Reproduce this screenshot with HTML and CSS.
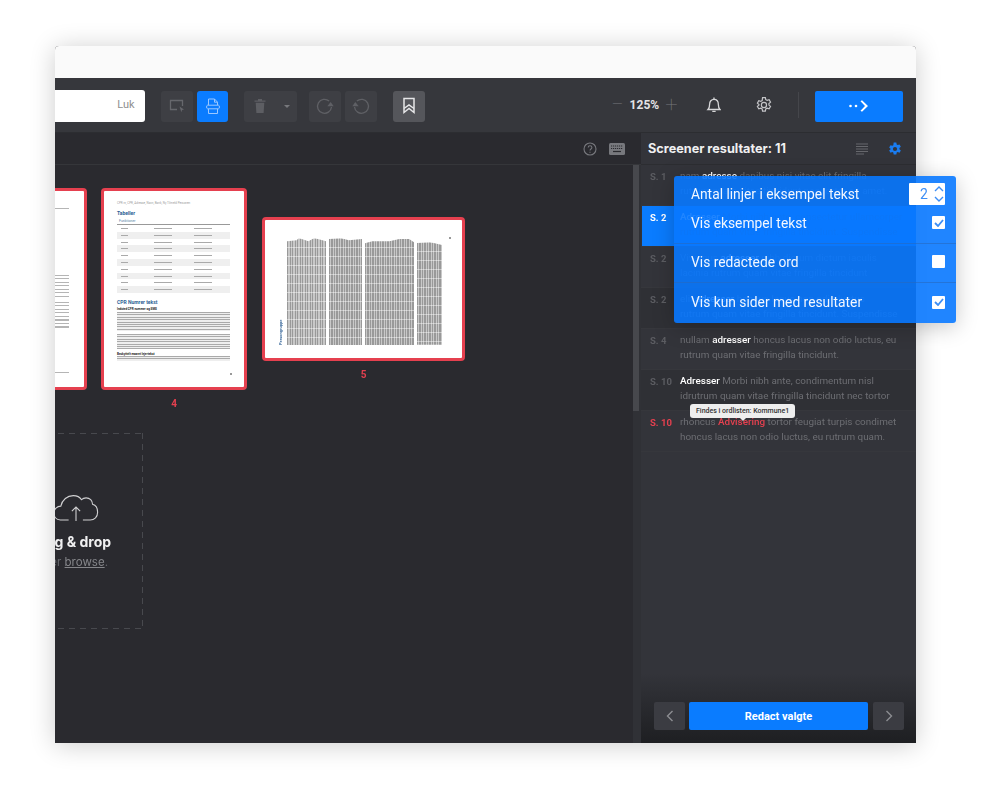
FILE: index.html
```html
<!DOCTYPE html>
<html lang="en">

<head>
  <meta charset="UTF-8">
  <meta name="viewport" content="width=device-width, initial-scale=1.0">
  <title>Screener</title>
  <link rel="stylesheet" href="styles.css">
</head>

<body>
  <div class="window">
    <div class="titlebar"></div>

    <header class="toolbar">
      <div class="search">Luk</div>
      <button class="tool first">
        <svg width="18" height="18" viewBox="0 0 18 18" fill="none" stroke="#66676c" stroke-width="1.3"><path d="M9 12.500H2.500v-9h12V9"/><path d="M11.500 9.500l4.500 3-2 .5-.6 2.200z" fill="#66676c" stroke="none"/></svg>
      </button>
      <button class="tool active">
        <svg width="18" height="18" viewBox="0 0 18 18" fill="none" stroke="#9cc8ff" stroke-width="1"><path d="M4.500 8V2h6l3 3.200V8M4.500 12v4.500h9V12"/><path d="M10.500 2v3.200h3"/><path d="M3.500 8.200h11c1.200 0 1.200 3.600 0 3.600h-11c-1.200 0-1.200-3.600 0-3.600z"/></svg>
      </button>
      <div class="tool-group">
        <button class="tool">
          <svg width="18" height="18" viewBox="0 0 18 18" fill="#5d5e63"><path d="M3.500 3.500h11v1.300h-11zM7 2h4v1.500H7zM4.700 5.800h8.600l-.7 10.200H5.400z"/></svg>
        </button>
        <button class="tool caret"><span></span></button>
      </div>
      <button class="tool redo">
        <svg width="22" height="22" viewBox="0 0 22 22" fill="none" stroke="#5f6065" stroke-width="1.3"><path d="M17.500 12a7 7 0 1 1-2.400-6"/><path d="M13.300 11.300h6.400l-3-4.200z" fill="#5f6065" stroke="none"/></svg>
      </button>
      <button class="tool">
        <svg width="22" height="22" viewBox="0 0 22 22" fill="none" stroke="#5f6065" stroke-width="1.3"><path d="M4.500 12a7 7 0 1 0 2.400-6"/><path d="M8.700 11.300H2.300l3-4.200z" fill="#5f6065" stroke="none"/></svg>
      </button>
      <button class="tool bookmark">
        <svg width="16" height="18" viewBox="0 0 16 18" fill="none" stroke="#e6e6e8" stroke-width="1.500"><path d="M3 1.500h10v14l-5-4-5 4z"/><path d="M3 11.500l5-3.500 5 3.500"/></svg>
      </button>

      <div class="zoom">
        <span class="zoom-sign">&minus;</span>
        <span class="zoom-value">125%</span>
        <span class="zoom-sign">+</span>
      </div>
      <svg class="bell" width="16" height="18" viewBox="0 0 16 18" fill="none" stroke="#d6d6d8" stroke-width="1.300"><path d="M2 13.500c1.300-1.300 1.600-2.500 1.600-5C3.600 5.300 5.400 3.300 8 3.300s4.400 2 4.400 5.200c0 2.500.3 3.700 1.600 5z"/><path d="M8 1.500v1.800M6.300 15.500h3.400"/></svg>
      <svg class="cog" width="18" height="18" viewBox="0 0 18 18" fill="none" stroke="#c4c4c7" stroke-width="1.200"><path d="M7.600 1.500h2.800l.4 2.100 1.400.8 2-.7 1.400 2.400-1.600 1.400v1.600l1.600 1.400-1.400 2.400-2-.7-1.400.8-.4 2.100H7.600l-.4-2.100-1.400-.8-2 .7-1.400-2.400 1.600-1.400V8.500L2.400 7.100l1.400-2.400 2 .7 1.400-.8z"/><circle cx="9" cy="9" r="2.600"/></svg>
      <span class="divider"></span>
      <button class="send">
        <svg width="22" height="12" viewBox="0 0 22 12" fill="#fff"><circle cx="2.500" cy="6" r="1.300"/><circle cx="8" cy="6" r="1.300"/><path d="M12.500 1.300l1.500-1.100L20 6l-6 5.800-1.500-1.100L17 6z"/></svg>
      </button>
    </header>

    <div class="content">
      <main class="viewer">
        <div class="viewer-bar">
          <svg width="14" height="14" viewBox="0 0 14 14" fill="none" stroke="#77787d" stroke-width="1.100"><circle cx="7" cy="7" r="6"/><path d="M5.200 5.500c0-2.300 3.700-2.300 3.700 0 0 1.500-1.900 1.400-1.900 3"/><path d="M7 9.700v1.100"/></svg>
          <svg width="16" height="12" viewBox="0 0 16 12"><rect width="16" height="12" rx="1.500" fill="#77787d"/><path d="M2 3h12M2 5.500h12" stroke="#2a2a2f" stroke-dasharray="1.200 .8"/><path d="M4 8.500h8" stroke="#2a2a2f" stroke-width="1.200"/></svg>
        </div>

        <div class="scroll-track"><span class="scroll-thumb"></span></div>

        <div class="pages">
          <figure class="page page-cut">
            <div class="sheet">
              <div class="stub-lines stub-top"></div>
              <div class="stub-lines stub-mid"></div>
              <div class="stub-lines stub-low"></div>
              <div class="stub-lines stub-end"></div>
            </div>
          </figure>

          <figure class="page">
            <div class="sheet sheet-text">
              <p class="doc-meta">CPR nr, CPR, Adresse, Navn, Bank, Ny Tilmeld Personen</p>
              <p class="doc-title">Tabeller</p>
              <p class="doc-sub">Funktioner</p>
              <div class="doc-table">
                <i></i><i class="alt"></i><i></i><i class="alt"></i><i></i><i class="alt"></i><i></i><i class="alt"></i><i></i><i class="alt"></i>
              </div>
              <p class="doc-title doc-title-2">CPR Numrer tekst</p>
              <p class="doc-bold">Indsted CPR nummer og SMS</p>
              <div class="doc-para"></div>
              <div class="doc-para doc-para-2"></div>
              <p class="doc-bold doc-bold-2">Beskyttelt maaret lejertekst</p>
              <div class="doc-para doc-para-3"></div>
              <span class="doc-num"></span>
            </div>
            <figcaption>4</figcaption>
          </figure>

          <figure class="page page-land">
            <div class="sheet sheet-land">
              <span class="land-title">Persongruppe</span>
              <div class="land-cols">
                <i class="w1"></i><i class="w2"></i><i class="w3"></i><i class="w4"></i>
              </div>
              <span class="land-num"></span>
            </div>
            <figcaption>5</figcaption>
          </figure>
        </div>

        <div class="dropzone">
          <svg width="46" height="28" viewBox="0 0 50 30" fill="none" stroke="#cfcfd1" stroke-width="1.200"><path d="M17 28H8C3 28 1 24 1 20.500 1 16 4.500 13 8.500 13 10 6 15.500 1.500 22 1.500c4 0 7.500 2 9 4.500 1.500-1.500 3.500-2 5-2 4 0 7 3 7 7 3.500 1 5.500 4 5.500 8.500 0 5-3.500 8.500-8 8.500h-8"/><path d="M25 29V14M20.500 18.500L25 14l4.500 4.500"/></svg>
          <strong>Drag &amp; drop</strong>
          <p>eller <u>browse</u>.</p>
        </div>
      </main>

      <aside class="results">
        <div class="results-head">
          <h2>Screener resultater: 11</h2>
          <svg width="12" height="12" viewBox="0 0 12 12" stroke="#66676c" stroke-width="1"><path d="M0 1h12M0 3.500h12M0 6h12M0 8.500h12M0 11h8"/></svg>
          <svg class="head-cog" width="14" height="14" viewBox="0 0 18 18" fill="#1a7cf0"><path fill-rule="evenodd" d="M7.300.8h3.400l.5 2.400 1.300.7 2.300-.8 1.700 2.900-1.800 1.600v1.600l1.800 1.600-1.700 2.900-2.300-.8-1.300.7-.5 2.400H7.300l-.5-2.400-1.300-.7-2.300.8-1.700-2.900 1.800-1.600V8.600L1.500 7l1.700-2.900 2.300.8 1.300-.7zM9 6.300a2.700 2.700 0 1 0 0 5.400 2.700 2.700 0 0 0 0-5.400z"/></svg>
        </div>

        <div class="result">
          <span class="pg">S. 1</span>
          <p>nam <b>adresse</b> dapibus nisi vitae elit fringilla<br>rutrum quam vitae tincidunt nec tortor sit amet.</p>
        </div>
        <div class="result selected">
          <span class="pg">S. 2</span>
          <p><b>Adresser</b> Morbi nibh ante, consectetur ullamcorper<br>rutrum quam vitae fringilla tincidunt. Suspendisse</p>
        </div>
        <div class="result">
          <span class="pg">S. 2</span>
          <p>Vivamus <b>adresser</b> nibh dictum dictum iaculis<br>lacinia rutrum quam vitae fringilla tincidunt</p>
        </div>
        <div class="result shade">
          <span class="pg">S. 2</span>
          <p>elit <b>adresser</b> honcus lacus non odio luctus<br>rutrum quam vitae fringilla tincidunt. Suspendisse</p>
        </div>
        <div class="result">
          <span class="pg">S. 4</span>
          <p>nullam <b>adresser</b> honcus lacus non odio luctus, eu<br>rutrum quam vitae fringilla tincidunt.</p>
        </div>
        <div class="result shade">
          <span class="pg">S. 10</span>
          <p><b>Adresser</b> Morbi nibh ante, condimentum nisl<br>idrutrum quam vitae fringilla tincidunt nec tortor</p>
        </div>
        <div class="result flagged">
          <span class="pg">S. 10</span>
          <p>rhoncus <b>Advisering</b> tortor feugiat turpis condimet<br>honcus lacus non odio luctus, eu rutrum quam.</p>
          <span class="tooltip">Findes i ordlisten: Kommune1</span>
        </div>

        <div class="results-foot">
          <button class="arrow"><svg width="8" height="12" viewBox="0 0 8 12" fill="none" stroke="#8d8e92" stroke-width="1.400"><path d="M6.500 1L1.500 6l5 5"/></svg></button>
          <button class="redact">Redact valgte</button>
          <button class="arrow arrow-next"><svg width="8" height="12" viewBox="0 0 8 12" fill="none" stroke="#8d8e92" stroke-width="1.400"><path d="M1.500 1l5 5-5 5"/></svg></button>
        </div>

        <div class="settings">
          <div class="setting setting-num">
            <span>Antal linjer i eksempel tekst</span>
            <div class="stepper">
              <em>2</em>
              <svg width="10" height="20" viewBox="0 0 10 20" fill="none" stroke="#3d8ef5" stroke-width="1.400"><path d="M1 7l4-4 4 4M1 13l4 4 4-4"/></svg>
            </div>
          </div>
          <div class="setting setting-sample">
            <span>Vis eksempel tekst</span>
            <label class="box"><svg width="10" height="8" viewBox="0 0 10 8" fill="none" stroke="#3d8ef5" stroke-width="1.800"><path d="M1 4l3 3 5-6"/></svg></label>
          </div>
          <div class="setting setting-words">
            <span>Vis redactede ord</span>
            <label class="box"></label>
          </div>
          <div class="setting setting-pages">
            <span>Vis kun sider med resultater</span>
            <label class="box"><svg width="10" height="8" viewBox="0 0 10 8" fill="none" stroke="#3d8ef5" stroke-width="1.800"><path d="M1 4l3 3 5-6"/></svg></label>
          </div>
        </div>
      </aside>
    </div>
  </div>
</body>

</html>
```

FILE: styles.css
```css
* {
  box-sizing: border-box;
}

body {
  margin: 0;
  height: 792px;
  padding: 46px 0 0 55px;
  overflow: hidden;
  background-color: #fff;
  font-family: Roboto, "Liberation Sans", sans-serif;
}

button {
  border: none;
  padding: 0;
  font-family: inherit;
}

p,
figure,
h2 {
  margin: 0;
}

.window {
  display: flex;
  flex-direction: column;
  width: 861px;
  height: 697px;
  border-radius: 4px 4px 0 0;
  background-color: #2a2a2f;
  box-shadow: 0 2px 26px rgba(0, 0, 0, 0.2);
  filter: blur(0.35px);
}

.titlebar {
  flex: 0 0 32px;
  border-radius: 4px 4px 0 0;
  background-color: #fafafa;
}

.toolbar {
  flex: 0 0 55px;
  display: flex;
  align-items: center;
  padding: 2px 13px 0 0;
  border-bottom: 1px solid #2c2d31;
  background-color: #36373c;
}

.search {
  width: 90px;
  height: 32px;
  padding-right: 10px;
  border-radius: 0 3px 3px 0;
  background-color: #fff;
  color: #8f8f8f;
  font-size: 11px;
  line-height: 30px;
  text-align: right;
}

.tool {
  display: flex;
  align-items: center;
  justify-content: center;
  width: 32px;
  height: 31px;
  margin-left: 4px;
  border-radius: 3px;
  background-color: #3e3f44;
}

.tool.first {
  margin-left: 16px;
}

.tool.active {
  background-color: #0a7cff;
}

.tool-group {
  display: flex;
  margin-left: 16px;
}

.tool-group .tool {
  margin-left: 0;
  border-radius: 3px 0 0 3px;
}

.tool-group .caret {
  width: 21px;
  border-radius: 0 3px 3px 0;
}

.caret span {
  border: 3px solid transparent;
  border-top: 3px solid #77787c;
  border-bottom: none;
}

.tool.redo {
  margin-left: 12px;
}

.tool.bookmark {
  margin-left: 16px;
  background-color: #55565b;
}

.zoom {
  display: flex;
  align-items: center;
  margin: 0 0 2px 186px;
  color: #77787c;
}

.zoom-sign {
  font-size: 22px;
  font-weight: 100;
  line-height: 20px;
}

.zoom-value {
  margin: 0 6px;
  color: #e4e4e6;
  font-size: 12px;
  font-weight: 700;
}

.bell {
  margin: 0 0 2px 28px;
}

.cog {
  margin: 0 0 2px 34px;
}

.divider {
  width: 1px;
  height: 26px;
  margin: 0 0 2px 25px;
  background-color: #45464b;
}

.send {
  display: flex;
  align-items: center;
  justify-content: center;
  width: 88px;
  height: 31px;
  margin-left: 16px;
  border-radius: 2px;
  background-color: #0a7cff;
}

.content {
  flex: 1;
  display: flex;
  min-height: 0;
}

.viewer {
  position: relative;
  width: 586px;
  overflow: hidden;
}

.viewer-bar {
  display: flex;
  align-items: center;
  justify-content: flex-end;
  gap: 12px;
  height: 32px;
  padding-right: 16px;
  border-bottom: 1px solid #35363a;
}

.scroll-track {
  position: absolute;
  top: 32px;
  right: 0;
  bottom: 0;
  width: 8px;
  background-color: #303136;
}

.scroll-thumb {
  display: block;
  width: 6px;
  height: 246px;
  background-color: #47484d;
}

.pages {
  display: flex;
  align-items: center;
  gap: 14px;
  margin: 23px 0 0 -120px;
}

.page {
  display: flex;
  flex-direction: column;
  align-items: center;
}

.page-land {
  margin-left: 1px;
}

.page figcaption {
  margin-top: 8px;
  color: #e5404f;
  font-size: 10px;
  font-weight: 700;
  line-height: 12px;
}

.page-cut {
  margin-bottom: 20px;
}

.sheet {
  position: relative;
  width: 146px;
  height: 202px;
  border: 3px solid #e5404f;
  border-radius: 4px;
  background-color: #fff;
}

.page-cut .sheet {
  width: 152px;
}

.stub-lines {
  position: absolute;
  right: 15px;
  width: 14px;
  background: repeating-linear-gradient(#b5b5b5 0 1px, #fff 1px 3.500px);
}

.stub-top {
  top: 17px;
  height: 2px;
}

.stub-mid {
  top: 84px;
  height: 24px;
}

.stub-low {
  top: 111px;
  height: 26px;
}

.stub-end {
  top: 181px;
  height: 2px;
}

.sheet-text {
  padding: 10px 14px 0 13px;
  font-size: 3px;
  line-height: 5px;
}

.doc-meta {
  color: #a0a0a0;
  font-size: 3px;
  line-height: 4px;
  white-space: nowrap;
}

.doc-title {
  margin-top: 5px;
  color: #2d5f95;
  font-size: 5px;
  font-weight: 700;
  line-height: 7px;
}

.doc-sub {
  margin-top: 2px;
  padding-left: 2px;
  border-bottom: 1px solid #999;
  color: #5b7fa6;
  font-size: 3.500px;
  line-height: 5px;
}

.doc-table i {
  display: block;
  height: 6.800px;
  background:
    linear-gradient(#aaa, #aaa) 4px 3px / 7px 1px no-repeat,
    linear-gradient(#aaa, #aaa) 37px 3px / 18px 1px no-repeat,
    linear-gradient(#aaa, #aaa) 77px 3px / 18px 1px no-repeat;
}

.doc-table i.alt {
  background-color: #efefef;
}

.doc-title-2 {
  margin-top: 6px;
}

.doc-bold {
  margin-top: 1px;
  color: #222;
  font-size: 3px;
  font-weight: 700;
  line-height: 4px;
  white-space: nowrap;
}

.doc-bold-2 {
  margin-top: 3px;
}

.doc-para {
  height: 19px;
  margin-top: 1px;
  background: repeating-linear-gradient(#aaa 0 1px, #eee 1px 2.400px);
}

.doc-para-2 {
  height: 15px;
  margin-top: 3px;
}

.doc-para-3 {
  height: 5px;
  margin-top: 0;
}

.doc-num {
  position: absolute;
  right: 12px;
  bottom: 12px;
  width: 2px;
  height: 2px;
  background-color: #999;
}

.sheet-land {
  width: 203px;
  height: 144px;
}

.land-title {
  position: absolute;
  left: 14px;
  top: 125px;
  color: #2d5f95;
  font-size: 4px;
  font-weight: 700;
  line-height: 4px;
  transform: rotate(-90deg);
  transform-origin: left top;
  white-space: nowrap;
}

.land-cols {
  position: absolute;
  left: 22px;
  top: 18px;
  bottom: 13px;
  display: flex;
  gap: 3px;
}

.land-cols i {
  display: block;
  height: 100%;
  background:
    repeating-linear-gradient(#fff 0 1px, transparent 1px 9px),
    repeating-linear-gradient(90deg, #999 0 1.300px, #c8c8c8 1.300px 2.500px);
  background-blend-mode: soft-light;
}

.land-cols .w1 {
  width: 39px;
  clip-path: polygon(0 3%, 25% 2%, 30% 0, 55% 3%, 70% 0, 100% 3%, 100% 100%, 0 100%);
}

.land-cols .w2 {
  width: 33px;
  clip-path: polygon(0 1%, 35% 0, 60% 2%, 100% 1%, 100% 100%, 0 100%);
}

.land-cols .w3 {
  width: 49px;
  clip-path: polygon(0 5%, 15% 3%, 50% 3%, 70% 1%, 90% 1%, 100% 4%, 100% 100%, 0 100%);
}

.land-cols .w4 {
  width: 25px;
  height: 96%;
  margin-top: 4px;
  clip-path: polygon(0 1%, 50% 0, 100% 3%, 100% 100%, 0 100%);
}

.land-num {
  position: absolute;
  top: 17px;
  right: 11px;
  width: 2px;
  height: 2px;
  background-color: #999;
}

.dropzone {
  display: flex;
  flex-direction: column;
  align-items: center;
  width: 140px;
  height: 196px;
  margin: 23px 0 0 -52px;
  padding: 61px 0 0 6px;
  background:
    repeating-linear-gradient(90deg, #48494e 0 6px, transparent 6px 11px) top / 100% 1px no-repeat,
    repeating-linear-gradient(90deg, #48494e 0 6px, transparent 6px 11px) bottom / 100% 1px no-repeat,
    repeating-linear-gradient(#48494e 0 6px, transparent 6px 11px) right / 1px 100% no-repeat;
}

.dropzone strong {
  margin: 11px 10px 0 0;
  color: #f0f0f1;
  font-family: Inter, Roboto, sans-serif;
  font-size: 14px;
  font-weight: 700;
  line-height: 18px;
  white-space: nowrap;
}

.dropzone p {
  margin: 3px 6px 0 0;
  color: #66676c;
  font-family: Inter, Roboto, sans-serif;
  font-size: 11.500px;
  line-height: 16px;
}

.dropzone u {
  color: #85868a;
}

.results {
  position: relative;
  display: flex;
  flex-direction: column;
  width: 275px;
  background-color: #33343a;
}

.results-head {
  display: flex;
  align-items: center;
  height: 32px;
  padding: 0 14px 0 7px;
  border-bottom: 1px solid #2c2d31;
}

.results-head h2 {
  flex: 1;
  color: #f0f0f1;
  font-family: Inter, Roboto, sans-serif;
  font-size: 12.700px;
  font-weight: 700;
}

.head-cog {
  margin-left: 20px;
}

.result {
  position: relative;
  display: flex;
  height: 41px;
  padding: 4px 0 0 9px;
  border-bottom: 1px solid #36373c;
}

.result .pg {
  flex: 0 0 30px;
  color: #5c5d62;
  font-size: 9.500px;
  font-weight: 700;
  line-height: 16px;
}

.result p {
  color: #6d6e73;
  font-size: 9.900px;
  line-height: 14.500px;
  white-space: nowrap;
}

.result b {
  color: #fff;
  font-weight: 500;
}

.result.selected {
  margin-left: 1px;
  padding-left: 8px;
  background-color: #0a7cff;
}

.result.selected .pg {
  color: #fff;
}

.result.selected p {
  color: #2a68b5;
}

.result.shade {
  background-color: #2f3035;
}

.result.flagged .pg,
.result.flagged b {
  color: #e5404f;
}

.tooltip {
  position: absolute;
  top: -7px;
  left: 49px;
  height: 14px;
  padding: 0 6px;
  border-radius: 3px;
  background-color: #eee;
  color: #333;
  font-size: 7px;
  font-weight: 500;
  line-height: 14px;
  white-space: nowrap;
}

.tooltip::after {
  content: "";
  position: absolute;
  left: 50%;
  top: 100%;
  margin-left: -3px;
  border: 3px solid transparent;
  border-top-color: #eee;
  border-bottom: none;
}

.results-foot {
  display: flex;
  align-items: flex-end;
  gap: 4px;
  height: 70px;
  margin-top: auto;
  padding: 0 0 13px 13px;
  background: linear-gradient(rgba(30, 31, 34, 0), #1e1f22);
}

.arrow {
  display: flex;
  align-items: center;
  justify-content: center;
  width: 31px;
  height: 28px;
  border-radius: 2px;
  background-color: #3b3c42;
}

.arrow-next {
  margin-left: 1px;
}

.redact {
  width: 179px;
  height: 28px;
  border-radius: 2px;
  background-color: #0a7cff;
  color: #fff;
  font-size: 11px;
  font-weight: 700;
}

.settings {
  position: absolute;
  top: 43px;
  left: 33px;
  display: flex;
  flex-direction: column;
  width: 282px;
  height: 147px;
  border-radius: 3px;
  background-color: rgba(8, 120, 255, 0.9);
  box-shadow: 0 4px 22px rgba(0, 0, 0, 0.22);
}

.setting {
  display: flex;
  align-items: center;
  justify-content: space-between;
  padding: 0 11px 0 17px;
  color: #f2f7ff;
  font-size: 13.800px;
}

.setting-num {
  height: 32px;
  padding-top: 4px;
}

.setting-sample {
  height: 35px;
  padding-bottom: 6px;
}

.setting-words {
  height: 39px;
  padding-bottom: 3px;
  border-top: 1px solid rgba(40, 105, 190, 0.6);
}

.setting-pages {
  height: 41px;
  padding-bottom: 2px;
  border-top: 1px solid rgba(40, 105, 190, 0.6);
}

.stepper {
  display: flex;
  align-items: center;
  justify-content: space-between;
  width: 36px;
  height: 22px;
  padding: 0 1px 0 11px;
  border-radius: 1px;
  background-color: #fff;
  color: #3d8ef5;
  font-size: 14px;
}

.stepper em {
  font-style: normal;
}

.box {
  display: flex;
  align-items: center;
  justify-content: center;
  width: 13px;
  height: 13px;
  border-radius: 1px;
  background-color: #fff;
}
```
